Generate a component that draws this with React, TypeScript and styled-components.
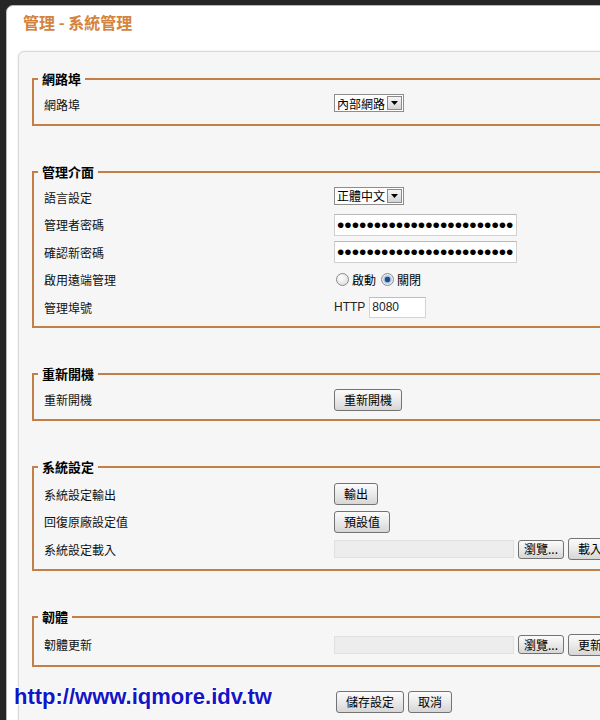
import React from "react";
import styled, { createGlobalStyle } from "styled-components";

const Global = createGlobalStyle`
  html, body { margin: 0; padding: 0; background: #262626; overflow: hidden; }
  body { font-family: "Noto Sans CJK TC", "Liberation Sans", sans-serif; }
`;

const Page = styled.div`
  position: relative;
  width: 600px;
  height: 720px;
  overflow: hidden;
  padding: 5px 0 0 6px;
  box-sizing: border-box;
`;

const Frame = styled.div`
  width: 720px;
  height: 820px;
  background: #fff;
  border: 1px solid #b8b8b8;
  border-radius: 7px 0 0 0;
  padding: 6px 0 0 11px;
  box-sizing: border-box;
`;

const Title = styled.h1`
  margin: 0 0 19px;
  padding-left: 5px;
  font-family: "Noto Sans CJK TC", "Liberation Sans", sans-serif;
  font-size: 16px;
  line-height: 20px;
  font-weight: bold;
  color: #d4833c;
`;

const Panel = styled.div`
  background: #f6f6f6;
  border: 1px solid #d8d8d8;
  border-radius: 6px 0 0 0;
  box-shadow: 0 0 3px rgba(0, 0, 0, 0.08);
  padding: 19px 0 0 13px;
  height: 900px;
`;

const Group = styled.fieldset<{ $roomy?: boolean }>`
  margin: 0 0 38px;
  border: 2px solid #c27f48;
  padding: ${(p) => (p.$roomy ? "6px 0 6px 10px" : "4px 0 5px 10px")};
  &:last-of-type { margin-bottom: 24px; }
`;

const Legend = styled.legend`
  font-size: 13px;
  font-weight: bold;
  line-height: 16px;
  padding: 0 4px;
  margin-left: -6px;
  color: #000;
`;

const Row = styled.div`
  display: flex;
  align-items: center;
  height: 27.5px;
`;

const Label = styled.div`
  width: 290px;
  flex: none;
  font-size: 12px;
  color: #111;
`;

const Controls = styled.div<{ $tight?: boolean }>`
  display: flex;
  align-items: center;
  gap: ${(p) => (p.$tight ? "0" : "4px")};
  font-size: 12px;
`;

const Select = styled.div`
  display: inline-flex;
  align-items: center;
  height: 18px;
  box-sizing: border-box;
  border: 1px solid #8d8d8d;
  background: #fff;
  font-size: 12px;
  padding-left: 2px;
  gap: 2px;
  color: #000;
  margin-top: -3px;
`;

const Arrow = styled.span`
  width: 15px;
  height: 14px;
  box-sizing: border-box;
  border: 1px solid #8a8a8a;
  background: linear-gradient(#f6f6f6, #d4d4d4);
  display: flex;
  align-items: center;
  justify-content: center;
  margin-right: 1px;
`;

const Password = styled.input`
  width: 183px;
  height: 22px;
  box-sizing: border-box;
  border: 1px solid #d0d0d0;
  border-top-color: #b8b8b8;
  background: #fff;
  padding: 0 2px;
  font-family: "Liberation Sans", Arial, sans-serif;
  font-size: 21px;
  line-height: 20px;
  letter-spacing: 0;
  color: #000;
  outline: none;
`;

const Radio = styled.input`
  appearance: none;
  width: 13px;
  height: 13px;
  margin: 0 3px 0 2px;
  border-radius: 50%;
  border: 1px solid #8c8c8c;
  background: radial-gradient(circle at 40% 35%, #ffffff, #d6d6d6);
  box-sizing: border-box;
  &:checked {
    background: radial-gradient(circle, #1d4f85 0 2.5px, #9ab8d8 3px, #e8eef5 5px);
  }
`;

const RadioText = styled.span`
  font-size: 12px;
  margin-right: 3px;
`;

const HttpText = styled.span`
  font-family: "Liberation Sans", Arial, sans-serif;
  font-size: 12px;
  color: #222;
`;

const PortInput = styled.input`
  width: 57px;
  height: 21px;
  box-sizing: border-box;
  border: 1px solid #d4d4d4;
  border-top-color: #bdbdbd;
  padding: 0 2px;
  font-family: "Liberation Sans", Arial, sans-serif;
  font-size: 12px;
  color: #222;
  outline: none;
`;

const Button = styled.button<{ $small?: boolean }>`
  height: ${(p) => (p.$small ? "19px" : "22px")};
  box-sizing: border-box;
  border: 1px solid #737373;
  border-radius: 3px;
  background: linear-gradient(#fbfbfb, #ececec 45%, #d6d6d6);
  padding: 0 ${(p) => (p.$small ? "5px" : "9px")};
  font-family: "Noto Sans CJK TC", "Liberation Sans", sans-serif;
  font-size: 12px;
  line-height: 1;
  color: #000;
  flex: none;
`;

const FileBox = styled.div`
  width: 180px;
  height: 18px;
  box-sizing: border-box;
  background: #ededed;
  border: 1px solid #e0e0e0;
`;

const Footer = styled.div`
  display: flex;
  gap: 4px;
  padding-left: 304px;
`;

const Watermark = styled.div`
  position: absolute;
  left: 14px;
  top: 684px;
  font-family: "Liberation Sans", Arial, sans-serif;
  font-weight: bold;
  font-size: 22px;
  line-height: 26px;
  color: #1515c8;
  text-shadow: 1px 0 0 #fff, -1px 0 0 #fff, 0 1px 0 #fff, 0 -1px 0 #fff;
`;

const DropArrow = () => (
  <Arrow>
    <svg width="7" height="4" viewBox="0 0 7 4">
      <path d="M0 0h7L3.5 4z" fill="#000" />
    </svg>
  </Arrow>
);

export default function App() {
  return (
    <>
      <Global />
      <Page>
        <Frame>
          <Title>管理 - 系統管理</Title>
          <Panel>
            <Group>
              <Legend>網路埠</Legend>
              <Row>
                <Label>網路埠</Label>
                <Controls>
                  <Select>內部網路<DropArrow /></Select>
                </Controls>
              </Row>
            </Group>

            <Group>
              <Legend>管理介面</Legend>
              <Row>
                <Label>語言設定</Label>
                <Controls>
                  <Select>正體中文<DropArrow /></Select>
                </Controls>
              </Row>
              <Row>
                <Label>管理者密碼</Label>
                <Controls>
                  <Password type="password" readOnly value="passwordpasswordpasswordpass" />
                </Controls>
              </Row>
              <Row>
                <Label>確認新密碼</Label>
                <Controls>
                  <Password type="password" readOnly value="passwordpasswordpasswordpass" />
                </Controls>
              </Row>
              <Row>
                <Label>啟用遠端管理</Label>
                <Controls $tight>
                  <Radio type="radio" name="remote" />
                  <RadioText>啟動</RadioText>
                  <Radio type="radio" name="remote" defaultChecked />
                  <RadioText>關閉</RadioText>
                </Controls>
              </Row>
              <Row>
                <Label>管理埠號</Label>
                <Controls>
                  <HttpText>HTTP</HttpText>
                  <PortInput readOnly value="8080" />
                </Controls>
              </Row>
            </Group>

            <Group>
              <Legend>重新開機</Legend>
              <Row>
                <Label>重新開機</Label>
                <Controls>
                  <Button>重新開機</Button>
                </Controls>
              </Row>
            </Group>

            <Group $roomy>
              <Legend>系統設定</Legend>
              <Row>
                <Label>系統設定輸出</Label>
                <Controls>
                  <Button>輸出</Button>
                </Controls>
              </Row>
              <Row>
                <Label>回復原廠設定值</Label>
                <Controls>
                  <Button>預設值</Button>
                </Controls>
              </Row>
              <Row>
                <Label>系統設定載入</Label>
                <Controls>
                  <FileBox />
                  <Button $small>瀏覽...</Button>
                  <Button>載入</Button>
                </Controls>
              </Row>
            </Group>

            <Group $roomy>
              <Legend>韌體</Legend>
              <Row>
                <Label>韌體更新</Label>
                <Controls>
                  <FileBox />
                  <Button $small>瀏覽...</Button>
                  <Button>更新</Button>
                </Controls>
              </Row>
            </Group>

            <Footer>
              <Button>儲存設定</Button>
              <Button>取消</Button>
            </Footer>
          </Panel>
        </Frame>
        <Watermark>http://www.iqmore.idv.tw</Watermark>
      </Page>
    </>
  );
}
